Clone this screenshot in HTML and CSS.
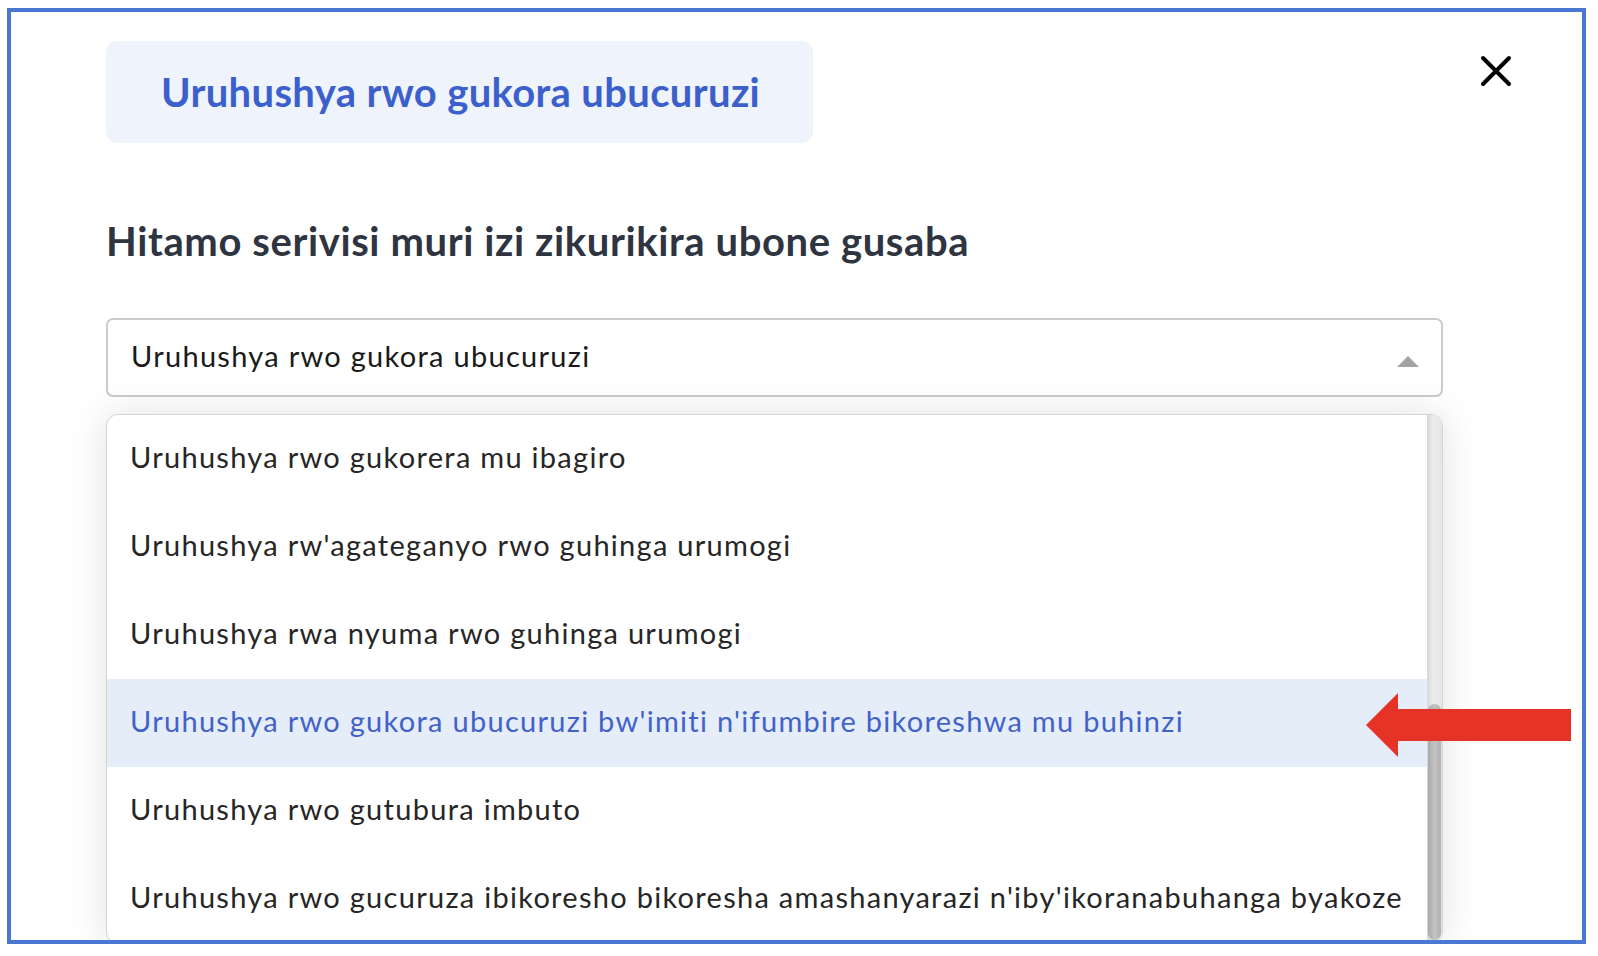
FILE: index.html
```html
<!DOCTYPE html>
<html lang="rw">
<head>
<meta charset="utf-8">
<title>Uruhushya rwo gukora ubucuruzi</title>
<link rel="stylesheet" href="styles.css">
</head>
<body>
<div class="frame">
  <header class="header">
    <div class="title-box"><h1 class="title">Uruhushya rwo gukora ubucuruzi</h1></div>
    <button class="close" aria-label="Close">
      <svg width="32" height="32" viewBox="0 0 32 32"><path d="M3 3 L29 29 M29 3 L3 29" stroke="#000" stroke-width="4" stroke-linecap="round" fill="none"/></svg>
    </button>
  </header>
  <main class="content">
    <h2 class="heading">Hitamo serivisi muri izi zikurikira ubone gusaba</h2>
    <div class="select">
      <span class="select-value">Uruhushya rwo gukora ubucuruzi</span>
      <span class="caret"></span>
    </div>
    <div class="dropdown">
      <ul class="options">
        <li class="option">Uruhushya rwo gukorera mu ibagiro</li>
        <li class="option">Uruhushya rw'agateganyo rwo guhinga urumogi</li>
        <li class="option">Uruhushya rwa nyuma rwo guhinga urumogi</li>
        <li class="option active">Uruhushya rwo gukora ubucuruzi bw'imiti n'ifumbire bikoreshwa mu buhinzi</li>
        <li class="option">Uruhushya rwo gutubura imbuto</li>
        <li class="option">Uruhushya rwo gucuruza ibikoresho bikoresha amashanyarazi n'iby'ikoranabuhanga byakoze</li>
      </ul>
      <div class="scrollbar"><div class="thumb"></div></div>
    </div>
  </main>
  <svg class="arrow" width="205" height="64" viewBox="0 0 205 64"><polygon points="0,32 32,0 32,16 205,16 205,48 32,48 32,64" fill="#e63327"/></svg>
</div>
</body>
</html>
```
FILE: styles.css
```css
html, body {
  margin: 0;
  padding: 0;
  background: #ffffff;
}
body {
  font-family: Lato, "Noto Sans", "Liberation Sans", sans-serif;
  color: #262626;
}
.frame {
  position: relative;
  box-sizing: border-box;
  width: 1579px;
  height: 936px;
  margin: 8px 0 0 7px;
  border: 4px solid #4a77d2;
  padding: 29px 0 0 95px;
  overflow: hidden;
}
.header {
  display: flex;
  justify-content: space-between;
  align-items: flex-start;
  padding-right: 70px;
}
.title-box {
  box-sizing: border-box;
  width: 707px;
  height: 102px;
  background: #eff3fc;
  border-radius: 11px;
  display: flex;
  align-items: center;
  padding-left: 55px;
}
.title {
  margin: 0;
  font-size: 40px;
  font-weight: 700;
  letter-spacing: 0.35px;
  color: #3b60cc;
  line-height: 48px;
  white-space: nowrap;
}
.close {
  margin-top: 14px;
  padding: 0;
  border: 0;
  background: none;
  width: 32px;
  height: 32px;
  display: block;
}
.close svg { display: block; }
.content {
  width: 1337px;
}
.heading {
  margin: 74px 0 0 0;
  font-size: 40px;
  font-weight: 700;
  letter-spacing: 0.6px;
  line-height: 48px;
  color: #2e3440;
  white-space: nowrap;
}
.select {
  box-sizing: border-box;
  margin-top: 53px;
  height: 79px;
  border: 2px solid #cbcbcb;
  border-radius: 7px;
  display: flex;
  align-items: center;
  justify-content: space-between;
  padding: 0 22px 0 23px;
}
.select-value {
  font-size: 29px;
  letter-spacing: 1.28px;
  line-height: 35px;
  color: #1a1a1a;
  margin-top: -4px;
}
.caret {
  width: 0;
  height: 0;
  border-left: 11px solid transparent;
  border-right: 11px solid transparent;
  border-bottom: 11px solid #a3a3a3;
  margin-top: 8px;
}
.dropdown {
  box-sizing: border-box;
  margin-top: 17px;
  height: 530px;
  border: 1px solid #d4d4d4;
  border-radius: 12px;
  box-shadow: 0 0 40px rgba(0, 0, 0, 0.12);
  background: #fff;
  display: flex;
  overflow: hidden;
}
.options {
  list-style: none;
  margin: 0;
  padding: 0;
  flex: 1;
}
.option {
  box-sizing: border-box;
  height: 88px;
  padding: 24px 0 0 23px;
  font-size: 29px;
  letter-spacing: 1.28px;
  line-height: 35px;
  color: #262626;
  white-space: nowrap;
}
.option.active {
  background: #e5edf9;
  color: #4262c8;
}
.scrollbar {
  width: 15px;
  position: relative;
  background: linear-gradient(to right, #d6d6d6, #ececec 40%, #e4e4e4);
  border-radius: 0 12px 0 0;
}
.thumb {
  position: absolute;
  left: 1px;
  right: 1px;
  top: 289px;
  bottom: 3px;
  border-radius: 7px;
  background: linear-gradient(to right, #a8a8a8, #c4c4c4 50%, #b0b0b0);
}
.arrow {
  position: absolute;
  left: 1355px;
  top: 681px;
  display: block;
}
```
